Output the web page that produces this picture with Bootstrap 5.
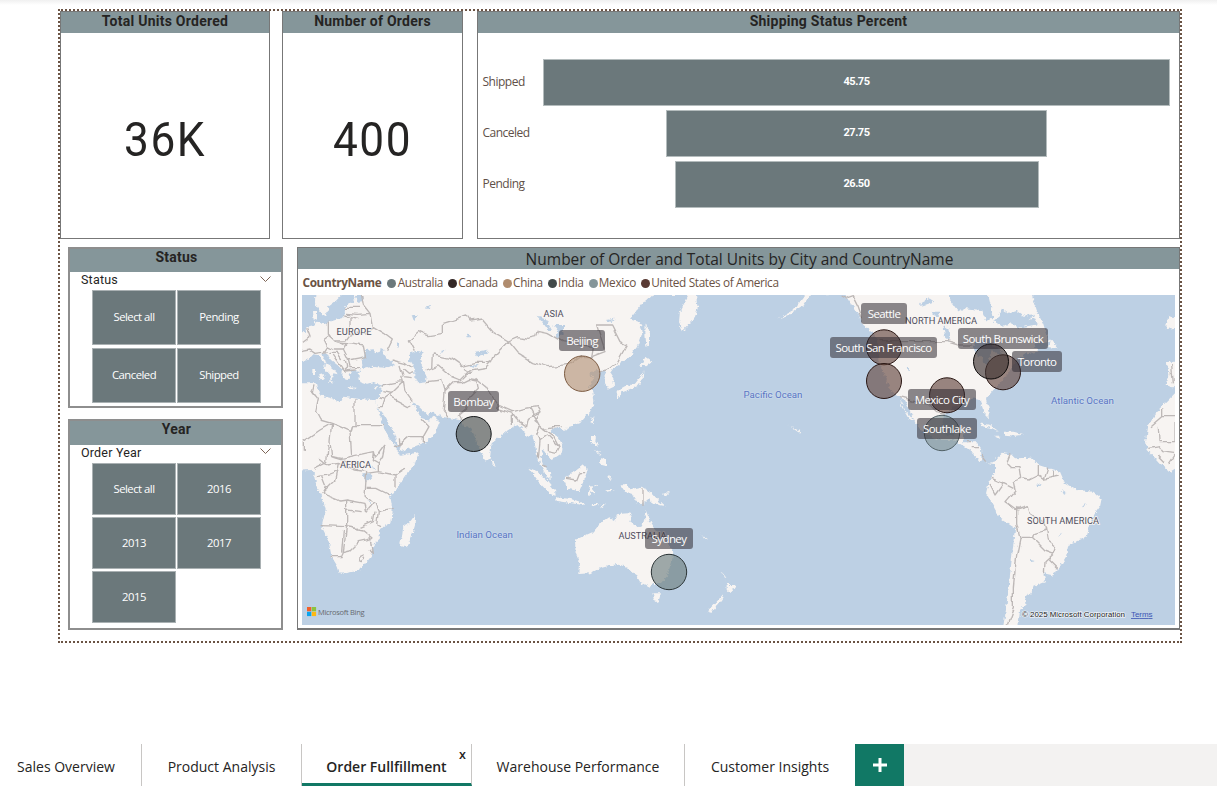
<!DOCTYPE html>
<html lang="en">
<head>
<meta charset="utf-8">
<title>Order Fullfillment</title>
<meta name="viewport" content="width=device-width, initial-scale=1">
<link rel="stylesheet" href="https://cdn.jsdelivr.net/npm/bootstrap@5.3.0/dist/css/bootstrap.min.css">
<script src="https://cdn.jsdelivr.net/npm/bootstrap@5.3.0/dist/js/bootstrap.bundle.min.js"></script>
<style>
:root{--slate:#85969a;--tile:#6b787b;--brown:#6b5344;--green:#117865}
body{font-family:"Open Sans","Noto Sans",sans-serif;font-size:12px;color:#252423;height:786px;overflow:hidden;background:linear-gradient(#f0f0f0,#fff 5px)}
.din{font-family:Roboto,sans-serif}
.report{width:1124px;height:634px;margin:9px 0 0 58px;border:2px dotted var(--brown)}
.visual{border:1px solid #777;border-radius:0;background:#fff;overflow:hidden}
.kpi-row{height:228px}
.visual-head{background:var(--slate);text-align:center;font-weight:700;font-size:14px;letter-spacing:.25px;line-height:18px;height:21px;flex:none}
.kpi-a{width:210px;margin-right:12px}.kpi-b{width:181px;margin-right:14px}
.kpi-num{font-size:48px;line-height:1;color:#252423;padding-top:9px;letter-spacing:1.6px;transform:scaleX(.92)}
.funnel{display:grid;grid-template-columns:65px 627px;grid-auto-rows:47px;row-gap:4px;padding-top:26px}
.funnel-label{color:#605048;align-self:center;padding:0 0 1px 4.500px;letter-spacing:-.5px}
.bar{background:var(--tile);border:1px solid #b4bcbd;color:#fff;font-weight:700;font-size:11px;letter-spacing:-.5px;margin:0 auto;display:flex;align-items:center;justify-content:center;height:47px}
.lower{padding:8px 0 0 8px}
.side{width:215px;margin-right:14px}
.side .visual{border-width:2px;border-color:#8e8e8e}
.side .visual-head{height:23px;line-height:17px;padding-left:2px}
.slicer-title{height:18px;padding:0 10px 0 11px;font-size:12.5px;line-height:16px;letter-spacing:.2px}
.tiles{display:grid;grid-template-columns:84px 84px;column-gap:1px;padding-left:22px}
.tile{background:var(--tile);border:1px solid #aab1b3;color:#fff;display:flex;align-items:center;justify-content:center;font-size:11.3px;letter-spacing:-.5px;padding-bottom:1px}
.years .tile{padding:1px 0 0}
.map-card{width:883px;height:383px;border-bottom-width:2px}
.map-card .visual-head{font-weight:400;font-size:15.500px;line-height:23px;letter-spacing:0;padding-left:2px}
.legend-row{height:26px;padding:2px 0 0 4.500px;color:#6b5344;font-size:11.800px;letter-spacing:-.35px}
.legend-row b{margin-right:6px}
.legend-row .key{margin-right:5px}
.dot{width:9px;height:9px;border-radius:50%;margin-right:1.300px}
.map{position:relative;width:873px;height:330px;margin-left:4px;background:#bdd0e4;overflow:hidden}
.map svg{display:block}
.pin{position:absolute;height:21px;border-radius:3px;background:rgba(48,42,50,.55);color:#fff;text-align:center;font-size:11.500px;line-height:21px;letter-spacing:-.6px;white-space:nowrap}
.tabs{height:42px;margin-top:101px;background:#f3f2f1;font-size:14px;color:#252423}
.tab{background:#fff;border-right:1px solid #c8c6c4;display:flex;align-items:center;justify-content:center;padding-top:3px}
.tab-on{font-weight:600;border-bottom:3px solid var(--green);position:relative;padding-top:6px}
.close-x{position:absolute;right:5px;top:2px;font-size:12.500px}
.add{background:var(--green);width:49px}
</style>
</head>
<body>
<main class="report">
  <section class="kpi-row d-flex">
    <div class="visual kpi-a d-flex flex-column"><div class="visual-head din">Total Units Ordered</div><div class="kpi-num din flex-fill d-flex align-items-center justify-content-center">36K</div></div>
    <div class="visual kpi-b d-flex flex-column"><div class="visual-head din">Number of Orders</div><div class="kpi-num din flex-fill d-flex align-items-center justify-content-center">400</div></div>
    <div class="visual flex-fill"><div class="visual-head din">Shipping Status Percent</div>
      <div class="funnel">
        <div class="funnel-label">Shipped</div><div class="bar din" style="width:627px">45.75</div>
        <div class="funnel-label">Canceled</div><div class="bar din" style="width:381px">27.75</div>
        <div class="funnel-label">Pending</div><div class="bar din" style="width:364px">26.50</div>
      </div>
    </div>
  </section>
  <section class="lower d-flex">
    <div class="side">
      <div class="visual" style="height:161px;margin-bottom:11px">
        <div class="visual-head din">Status</div>
        <div class="slicer-title din d-flex justify-content-between">Status<svg width="11" height="14" viewBox="0 0 11 14" fill="none" stroke="#7d6455"><path d="M.5 4.5l5 5 5-5"/></svg></div>
        <div class="tiles" style="grid-auto-rows:55px;row-gap:3px"><div class="tile">Select all</div><div class="tile">Pending</div><div class="tile">Canceled</div><div class="tile">Shipped</div></div>
      </div>
      <div class="visual" style="height:211px">
        <div class="visual-head din" style="height:24px">Year</div>
        <div class="slicer-title din d-flex justify-content-between">Order Year<svg width="11" height="14" viewBox="0 0 11 14" fill="none" stroke="#7d6455"><path d="M.5 3.5l5 5 5-5"/></svg></div>
        <div class="tiles years" style="grid-auto-rows:52px;row-gap:2px"><div class="tile">Select all</div><div class="tile">2016</div><div class="tile">2013</div><div class="tile">2017</div><div class="tile">2015</div></div>
      </div>
    </div>
    <div class="visual map-card">
      <div class="visual-head">Number of Order and Total Units by City and CountryName</div>
      <div class="legend-row d-flex align-items-center">
        <b>CountryName</b>
        <i class="dot" style="background:#6b787b"></i><span class="key">Australia</span>
        <i class="dot" style="background:#342826"></i><span class="key">Canada</span>
        <i class="dot" style="background:#b08c6e"></i><span class="key">China</span>
        <i class="dot" style="background:#424a4a"></i><span class="key">India</span>
        <i class="dot" style="background:#85969a"></i><span class="key">Mexico</span>
        <i class="dot" style="background:#5a3a34"></i><span>United States of America</span>
      </div>
      <div class="map">
        <svg width="873" height="330" viewBox="21 150 2619 990">
          <defs>
            <filter id="coast" x="0" y="0" width="1" height="1"><feTurbulence type="fractalNoise" baseFrequency=".09" numOctaves="3" seed="4"/><feDisplacementMap in="SourceGraphic" scale="14" xChannelSelector="R" yChannelSelector="G"/></filter>
            <filter id="border" x="0" y="0" width="1" height="1"><feTurbulence type="fractalNoise" baseFrequency=".03" numOctaves="1" seed="7"/><feDisplacementMap in="SourceGraphic" scale="22" xChannelSelector="R" yChannelSelector="G"/></filter>
          </defs>
          <g filter="url(#coast)">
          <rect x="0" y="130" width="2660" height="1030" fill="#bdd0e4"/>
          <g fill="#f7f4f2">
            <!-- Europe and Asia -->
            <path d="M165 120L178 165 150 185 150 200 145 218 130 222 100 232 88 238 60 228 58 240 35 245 30 260 0 265 0 350 40 345 55 328 72 330 80 345 100 360 118 374 128 388 115 385 110 402 102 408 106 390 88 370 90 350 82 325 95 325 108 345 130 362 143 376 142 392 152 404 165 405 158 388 172 382 165 373 187 380 200 370 192 382 190 400 197 412 215 418 235 412 260 418 258 440 250 460 240 465 248 488 270 515 295 560 305 590 318 618 345 610 395 590 420 568 435 530 415 512 403 527 378 518 352 472 372 485 400 512 412 500 440 515 480 522 500 528 505 545 525 548 535 565 555 615 572 650 585 640 590 595 610 580 640 555 655 545 670 540 685 555 700 575 712 570 720 600 728 640 740 665 755 695 767 703 765 682 745 660 737 640 745 615 757 632 770 645 800 625 803 600 788 575 765 560 775 548 795 548 810 558 815 548 855 535 885 500 898 470 895 440 882 420 895 400 880 388 905 375 928 378 930 415 942 432 957 425 955 400 945 385 955 370 975 355 985 350 1005 335 1030 300 1043 260 1035 232 1005 222 1050 165 1080 150 1145 150 1150 120z"/>
            <path d="M62 120L60 175 78 205 95 215 100 185 120 170 140 150 140 120zM54 195l12 0 0 28-10 5zM72 388l14-4 3 18-12 4zM52 372l8 0 0 18-8 0zM100 407l18 3-4 8zM158 426l24 2-4 5-18-2zM235 428l12-4-5 10z"/>
            <!-- Africa and Madagascar -->
            <path d="M0 415L66 415 70 435 80 452 110 460 138 472 145 455 178 460 215 464 240 465 250 495 262 535 275 565 300 600 312 625 318 632 372 622 360 655 330 695 300 740 285 750 293 795 290 830 250 855 255 880 235 900 232 930 200 970 175 980 135 987 128 965 110 935 100 885 80 845 92 795 80 750 62 725 62 695 50 675 0 677z"/>
            <path d="M362 807L343 833 325 842 322 868 316 895 323 905 336 905 350 875 363 830zM590 640l11 20-8 4z"/>
            <!-- Kamchatka, Sakhalin, Japan, Taiwan, Philippines -->
            <path d="M1180 150L1155 200 1152 230 1160 262 1178 243 1200 215 1208 190 1203 150zM1052 235l10 30 0 35-8 5-3-40zM1050 335l22 15-18 14-18-2zM1045 375l-2 28-15 20-30 12-28 10-5-5 30-16 25-8 20-25zM967 435l12 8-8 18-8-10zM890 520l8-4-5 22-6-8zM888 570l15 0-2 20 12 15-10-3-15-10zM918 640l15 2 0 22-18-5zM900 615l20 14-12-2z"/>
            <!-- Indonesia, New Guinea -->
            <path d="M700 668L725 678 755 705 780 735 782 752 765 748 735 715zM783 757l50 6 35 12-3 5-80-12zM805 703L845 675 865 660 878 675 867 705 853 738 818 732zM885 725l22-6 2 4-18 6 12 14-6 2-8-10-2 18-6-2zM890 777l25 0-20 6zM915 785l18-10-10 14zM975 718l18 0 12 15 35-8 30 18 25 28 14 12-30-6-20-14-17 15-18-8-14-24-20-6zM940 690l8 4-4 16zM930 735l30 0-20 5zM1100 748l25-8-10 12z"/>
            <!-- Australia, Tasmania, New Zealand -->
            <path d="M840 885L895 860 920 830 940 817 960 828 967 807 1000 805 1010 807 1003 828 1035 847 1046 830 1052 795 1066 830 1080 855 1115 890 1135 920 1130 955 1115 995 1095 1017 1075 1017 1065 1025 1035 1010 1020 985 1010 982 995 965 965 957 915 970 885 985 853 987 855 955 842 925zM1072 1045l26 0-8 25-10 0zM1295 1010l10 10 17 0-17 25-10-10zM1285 1047l-5 18-30 38-13-5 28-28zM1280 980l14 18-6 0zM1214 865l22 18-4 0z"/>
            <!-- North and Central America -->
            <path d="M1640 130L1660 165 1690 208 1702 240 1740 265 1750 300 1750 345 1770 395 1788 440 1812 452 1825 490 1842 510 1860 532 1840 520 1820 485 1814 457 1830 465 1855 520 1882 560 1930 585 1975 585 2010 605 2035 625 2055 650 2085 653 2105 648 2100 658 2060 650 2058 610 2045 592 2005 592 2010 545 1985 545 1975 575 1950 570 1940 540 1950 500 1990 480 2025 460 2055 465 2068 505 2082 520 2085 505 2073 462 2095 435 2115 415 2140 385 2160 350 2195 325 2230 320 2215 295 2260 292 2245 240 2225 195 2205 130zM1450 220L1495 195 1530 150 1545 150 1525 180 1480 210zM1585 130l10 25 10-25z"/>
            <path d="M2265 280l25 30-30-4zM2050 535l35 5 28 20-25-12-30-5zM2130 560l25 0 32 8-25 4-32-3zM2100 575l18 0-8 5zM2630 350l30 0 0 75-30 2-18-8 8-30-4-38zM2620 212l18 8 2 28-28 5 4-18zM1480 540l40 22-10 0z"/>
            <!-- South America -->
            <path d="M2100 645L2125 622 2145 625 2160 640 2210 638 2230 660 2295 680 2310 715 2345 735 2395 740 2420 760 2415 785 2390 820 2375 875 2320 900 2313 935 2285 980 2270 990 2245 985 2253 1010 2215 1025 2210 1045 2190 1055 2195 1075 2175 1095 2170 1145 2125 1145 2130 1115 2140 1035 2150 945 2160 850 2115 820 2085 765 2073 745 2083 705 2100 685z"/>
            <!-- West Africa at the right edge -->
            <path d="M2660 425L2595 490 2560 540 2553 590 2558 615 2595 655 2625 680 2660 660z"/>
          </g>
          <g fill="#bdd0e4">
            <path d="M200 350L215 315 235 313 242 325 260 318 275 338 300 360 270 368 230 365 205 372zM345 325L365 318 387 322 375 345 385 375 395 392 392 412 370 415 358 395 358 370 342 345zM255 310l18 8-16 4zM180 150l22 0 0 22-16 2zM205 685l22 0 4 18-20 8zM230 660l10 14-5 0zM215 760l14 18-4 0zM775 240l32 0 0 20-20 24-8-8 12-16zM728 215l24 8 20 34-10 2-14-20zM515 265l12 8-8 8zM540 320l40-6-5 12-30 8zM350 210l18 0-10 22zM390 190l18-12-4 14zM305 290l8 8-5 12zM935 225l25-4-14 10zM435 318l14-4-8 10zM520 362l36-2-20 8z"/>
            <path d="M1965 130L2075 130 2095 215 2075 230 2058 195 2010 190 1990 200 1965 165zM1875 175l28-15 15 10-35 12zM1910 200l25 0-8 14-12-4zM1945 240l15 10 5 40-14-8zM2035 295l45-15 15 25 25 10 0 12-30-8-15 45-20-30-15-8zM1835 365l12 12-10 0zM2095 228l30 18 25-12 20 14 60-10-10-18-20 6 25-20-40 6-20-14-25 8-20-15-5 20zM2235 630l12 5-10 3zM2300 735l14 10-8 3zM2225 715l16 8-16 0zM2290 875l12-14-8 14zM2205 945l14 4-14 2zM2362 783l14-6-8 8z"/>
          </g>
          </g>
          <g fill="none" stroke="#bdb8b7" stroke-width="4" stroke-linejoin="round" filter="url(#border)">
            <!-- Europe -->
            <path d="M100 230L100 268 120 285 150 285 165 265 165 215 145 210M200 150L205 180 225 205 232 245 265 265 292 285 275 320M150 190L195 190M150 205L190 208 225 205M165 215L190 220M165 270L215 260 232 245M85 285L105 270 125 290 155 300 145 315 115 315 95 305zM35 250L45 275 25 290M20 320L45 315 60 325 95 320M95 305L85 320M125 290L180 295 205 300 212 335 160 345 145 315M100 325L125 325 140 345M125 345L145 375 155 365 150 345M160 345L165 365 195 365M145 375L185 372M112 330L125 350"/>
            <!-- Caucasus, Middle East -->
            <path d="M290 345L330 355 350 370M315 360L325 395 350 398M325 372L340 385 355 380M260 420L300 412 325 410 320 395M265 440L290 445 325 410M325 410L330 440 352 470M255 455L270 460 290 445M270 460L262 485 250 485M285 455L340 485 352 480M300 605L340 575 385 575 402 545 378 520M385 575L385 595M310 580L312 600 340 575M180 462L180 542 270 542M60 418L55 440 70 460 62 500 75 525 110 535 165 560 170 542 180 542M50 435L62 450M25 590L75 555 110 535 105 590 110 635 160 650"/>
            <!-- Central Asia, India, China -->
            <path d="M358 320L340 285 370 260 400 272 445 265 445 235 515 213 525 228 560 222 595 262 640 288 600 330 590 355 540 355 500 365 465 340 440 335 412 330 410 370M395 375L430 360 470 395 495 405 520 380 545 375 575 370 590 355M395 410L440 405 450 440 445 500 460 518M450 440L480 410 500 410 520 400 545 405M510 370L535 385 510 385M545 400L550 430 525 455 515 490 490 510 500 528M545 400L575 425 590 450 610 480 655 500 690 490 725 485 735 500 700 520 695 545 670 530 655 510 655 540M610 480L605 490 655 505M640 288L670 325 710 350 760 365 825 358 860 335 890 335 895 305 860 300 800 290 755 265 730 260 725 275 700 280 670 275 640 288M890 335L930 320 905 240 950 240 975 290 995 300 965 355M960 355L935 375 910 380M735 500L720 530 745 550 770 545 800 545M705 490L735 545 725 570 735 590 730 640M735 590L760 570 780 590 795 605M745 550L780 575 795 605 785 625 760 620 760 600M742 660L755 665M810 700L845 705 855 680 870 680M1044 730L1044 780"/>
            <!-- Africa -->
            <path d="M110 635L140 640 235 620 240 640 270 600M25 590L25 620M165 560L170 630M235 620L232 650 250 660 250 680 215 685M100 600L95 650 55 670M75 640L100 660 130 655 185 675 215 680 210 750 235 775 215 800 210 775 155 765 155 795M62 695L100 690 125 680M130 655L120 705 80 745 130 765 135 768 155 765M80 745L92 725 80 695M155 795L155 845 80 842M155 795L200 800M155 845L190 850 235 830 240 800M250 680L300 690 300 725M215 730L245 730 285 750M240 775L250 800 293 790M250 800L245 840 255 845M155 845L205 855 235 880M155 845L145 920 165 915 190 890 235 880M145 920L138 935 110 935M145 860L140 920M225 875L232 925 222 912M195 935l10-5 5 8-8 12-8-4zM270 600L262 640 250 660M300 690L330 670"/>
            <!-- Americas -->
            <path d="M1640 150L1660 160 1675 155 1690 185 1702 220M1750 290L1955 290 1990 300 2030 300M1812 455L1850 465 1900 475 1925 500 1950 505M2010 590L2025 590M2030 605L2055 605M2060 630L2075 650M2145 625L2135 650 2150 665 2175 665 2180 700 2200 705 2230 690 2230 660M2180 700L2155 710 2160 735 2130 770 2165 795 2170 790M2085 720L2100 750 2125 715 2155 730M2090 700L2125 715M2230 690L2245 700 2295 690M2255 668L2245 700M2275 675L2275 695M2165 795L2200 785 2205 805 2250 835 2255 855 2220 865 2215 880 2250 915 2278 925 2285 905 2260 885 2255 855M2165 795L2165 840 2175 880 2215 880M2175 880L2165 930 2155 1030 2155 1090 2135 1145M2278 925L2250 950 2248 985M2260 945L2285 970M2600 490L2600 515 2565 545M2600 515L2640 515M2590 545L2592 590 2640 590M2640 500L2640 590M2560 610L2590 605 2600 620 2640 625M2590 630L2610 650M2620 660L2640 630M2630 360L2635 415"/>
          </g>
        </svg>
        <svg class="position-absolute top-0 start-0" width="873" height="330" viewBox="302 295 873 330">
          <g font-family="Roboto,sans-serif" font-size="9.3" fill="#4f4f5d" stroke="#f7f4f2" stroke-width="1.6" paint-order="stroke" lengthAdjust="spacingAndGlyphs">
            <text x="336.500" y="334.500" textLength="35">EUROPE</text><text x="543.500" y="317" textLength="20">ASIA</text><text x="340" y="467.500" textLength="31">AFRICA</text><text x="618.500" y="539" textLength="48">AUSTRALIA</text><text x="905" y="324" textLength="72">NORTH AMERICA</text><text x="1027" y="523.500" textLength="72">SOUTH AMERICA</text>
            <g fill="#5a76c4" stroke="#c8d8ea" font-size="9.8"><text x="456.500" y="538" textLength="56.500">Indian Ocean</text><text x="743.500" y="398" textLength="59">Pacific Ocean</text><text x="1051" y="403.500" textLength="63">Atlantic Ocean</text></g>
          </g>
          <path fill="#f25f2a" d="M307 607h4.300v4.300h-4.300z"/><path fill="#8bc43f" d="M311.800 607h4.300v4.300h-4.300z"/><path fill="#0ba4ee" d="M307 611.800h4.300v4.300h-4.300z"/><path fill="#fdb813" d="M311.800 611.800h4.300v4.300h-4.300z"/>
          <text x="318" y="614.500" font-family="Open Sans" font-size="7.500" fill="#666a70" textLength="46.500">Microsoft Bing</text>
          <g font-family="Liberation Sans" font-size="8"><text x="1022" y="617" fill="#222" stroke="#fff" stroke-opacity=".7" stroke-width="1.500" paint-order="stroke" textLength="103">© 2025 Microsoft Corporation</text><text x="1131" y="617" fill="#3c56b4" text-decoration="underline" textLength="21.500">Terms</text></g>
          <g fill-opacity=".65">
            <circle cx="473.700" cy="434" r="17.500" fill="#4b5150" stroke="#16191b"/>
            <circle cx="582.200" cy="373.700" r="17.700" fill="#b6957a" stroke="#7c5b42"/>
            <circle cx="669" cy="572" r="17.700" fill="#6f7f80" stroke="#2b3436"/>
            <circle cx="942" cy="433" r="17.700" fill="#85969a" stroke="#526267"/>
            <g fill="#654840" stroke="#2a1714"><circle cx="884" cy="347.300" r="17.500"/><circle cx="884" cy="381" r="17.500"/><circle cx="947" cy="395.300" r="17.500"/><circle cx="1003" cy="372.300" r="17.500"/></g>
            <circle cx="991" cy="361.500" r="17.500" fill="#3f3433" stroke="#0d0b0b"/>
          </g>
        </svg>
        <span class="pin" style="left:146px;top:96px;width:51px">Bombay</span>
        <span class="pin" style="left:257px;top:35px;width:46px">Beijing</span>
        <span class="pin" style="left:343px;top:233px;width:48px">Sydney</span>
        <span class="pin" style="left:559px;top:8px;width:46px">Seattle</span>
        <span class="pin" style="left:528px;top:42px;width:107px">South San Francisco</span>
        <span class="pin" style="left:606px;top:94px;width:68px">Mexico City</span>
        <span class="pin" style="left:615px;top:123px;width:60px">Southlake</span>
        <span class="pin" style="left:656px;top:33px;width:90px">South Brunswick</span>
        <span class="pin" style="left:710px;top:56px;width:50px">Toronto</span>
      </div>
    </div>
  </section>
</main>
<nav class="tabs d-flex">
  <div class="tab" style="width:142px;padding-right:9px">Sales Overview</div>
  <div class="tab" style="width:160px">Product Analysis</div>
  <div class="tab tab-on" style="width:170px">Order Fullfillment<span class="close-x">x</span></div>
  <div class="tab" style="width:213px">Warehouse Performance</div>
  <div class="tab border-end-0" style="width:170px">Customer Insights</div>
  <div class="add d-flex align-items-center justify-content-center"><svg width="14" height="14" viewBox="0 0 14 14" stroke="#fff" stroke-width="3"><path d="M7 0v14M0 7h14"/></svg></div>
</nav>
</body>
</html>
